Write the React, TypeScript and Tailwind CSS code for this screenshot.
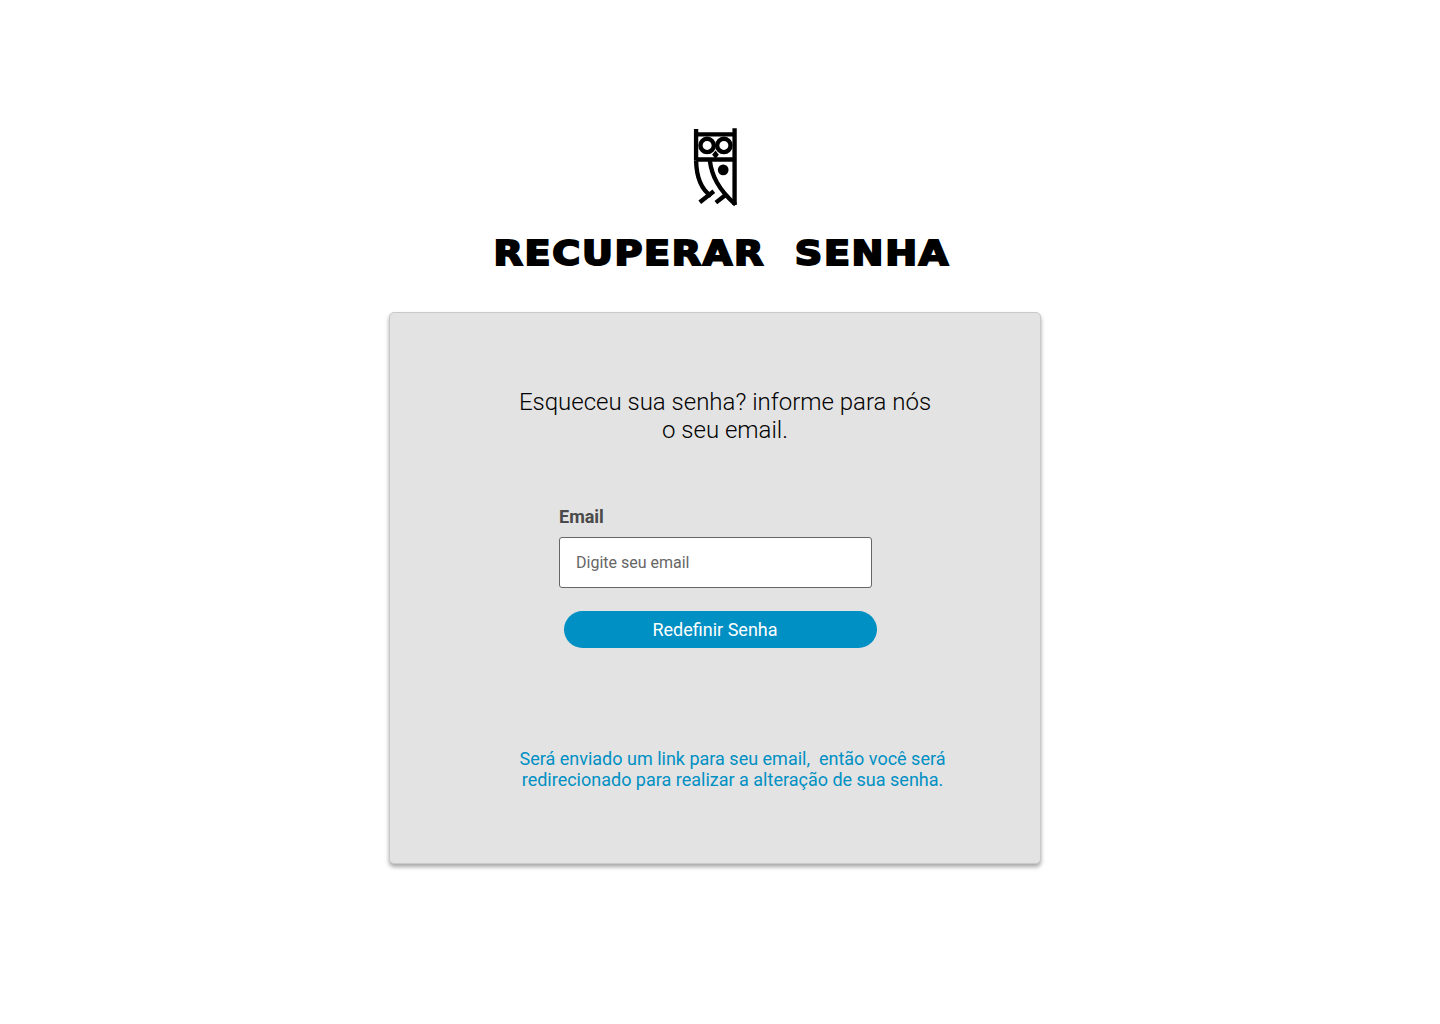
function OwlLogo() {
  return (
    <svg viewBox="35 20 140 242" className="h-[81px] w-[47px]" aria-hidden="true">
      <g fill="none" stroke="#000" strokeWidth="13">
        <path d="M47 120V26M162 24V253M42 42H165M47 117H165" />
        <circle cx="80" cy="75" r="20" />
        <circle cx="130" cy="75" r="20" />
        <path d="M47 120C48 165 60 205 92 226" />
        <path d="M88 120C94 165 112 205 165 252" />
        <path d="M100 212L58 245M134 224L106 246" />
      </g>
      <path d="M105 90L115 103L105 115L95 103Z" fill="#000" />
      <circle cx="128" cy="148" r="16" fill="#000" />
    </svg>
  );
}

export default function App() {
  return (
    <div className="flex min-h-[1024px] flex-col items-center bg-white pr-[10px] pt-[127px] font-['Roboto',sans-serif]">
      <OwlLogo />
      <h1 className="ml-[13px] mt-[25px] scale-x-[1.12] whitespace-pre font-['DejaVu_Sans',sans-serif] text-[34px] font-bold leading-[40px] tracking-[1.5px] text-black [-webkit-text-stroke:2px_black]">
        RECUPERAR  SENHA
      </h1>
      <main className="mt-[39px] h-[552px] w-[652px] rounded-[5px] border border-[#c9c9c9] bg-[#e3e3e3] pl-[120px] pt-[75px] shadow-[0_3px_4px_rgba(0,0,0,0.35)]">
        <p className="w-[430px] text-center text-[24px] font-light leading-[28px] text-black">
          Esqueceu sua senha? informe para nós
          <br />o seu email.
        </p>
        <label className="ml-[49px] mt-[62px] block text-[18px] font-bold leading-[21px] text-[#4a4a4a]">Email</label>
        <div className="ml-[49px] mt-[10px] flex h-[51px] w-[313px] items-center rounded-[3px] border border-[#666666] bg-white px-4 text-[16px] text-[#666666]">
          Digite seu email
        </div>
        <button className="ml-[54px] mt-[23px] flex h-[37px] w-[313px] items-center justify-center rounded-full bg-[#0090c4] pr-[11px] text-[18px] text-white">
          Redefinir Senha
        </button>
        <p className="mt-[100px] w-[445px] whitespace-pre text-center text-[18px] leading-[21px] text-[#0090c4]">
          {"Será enviado um link para seu email,  então você será\nredirecionado para realizar a alteração de sua senha."}
        </p>
      </main>
    </div>
  );
}
